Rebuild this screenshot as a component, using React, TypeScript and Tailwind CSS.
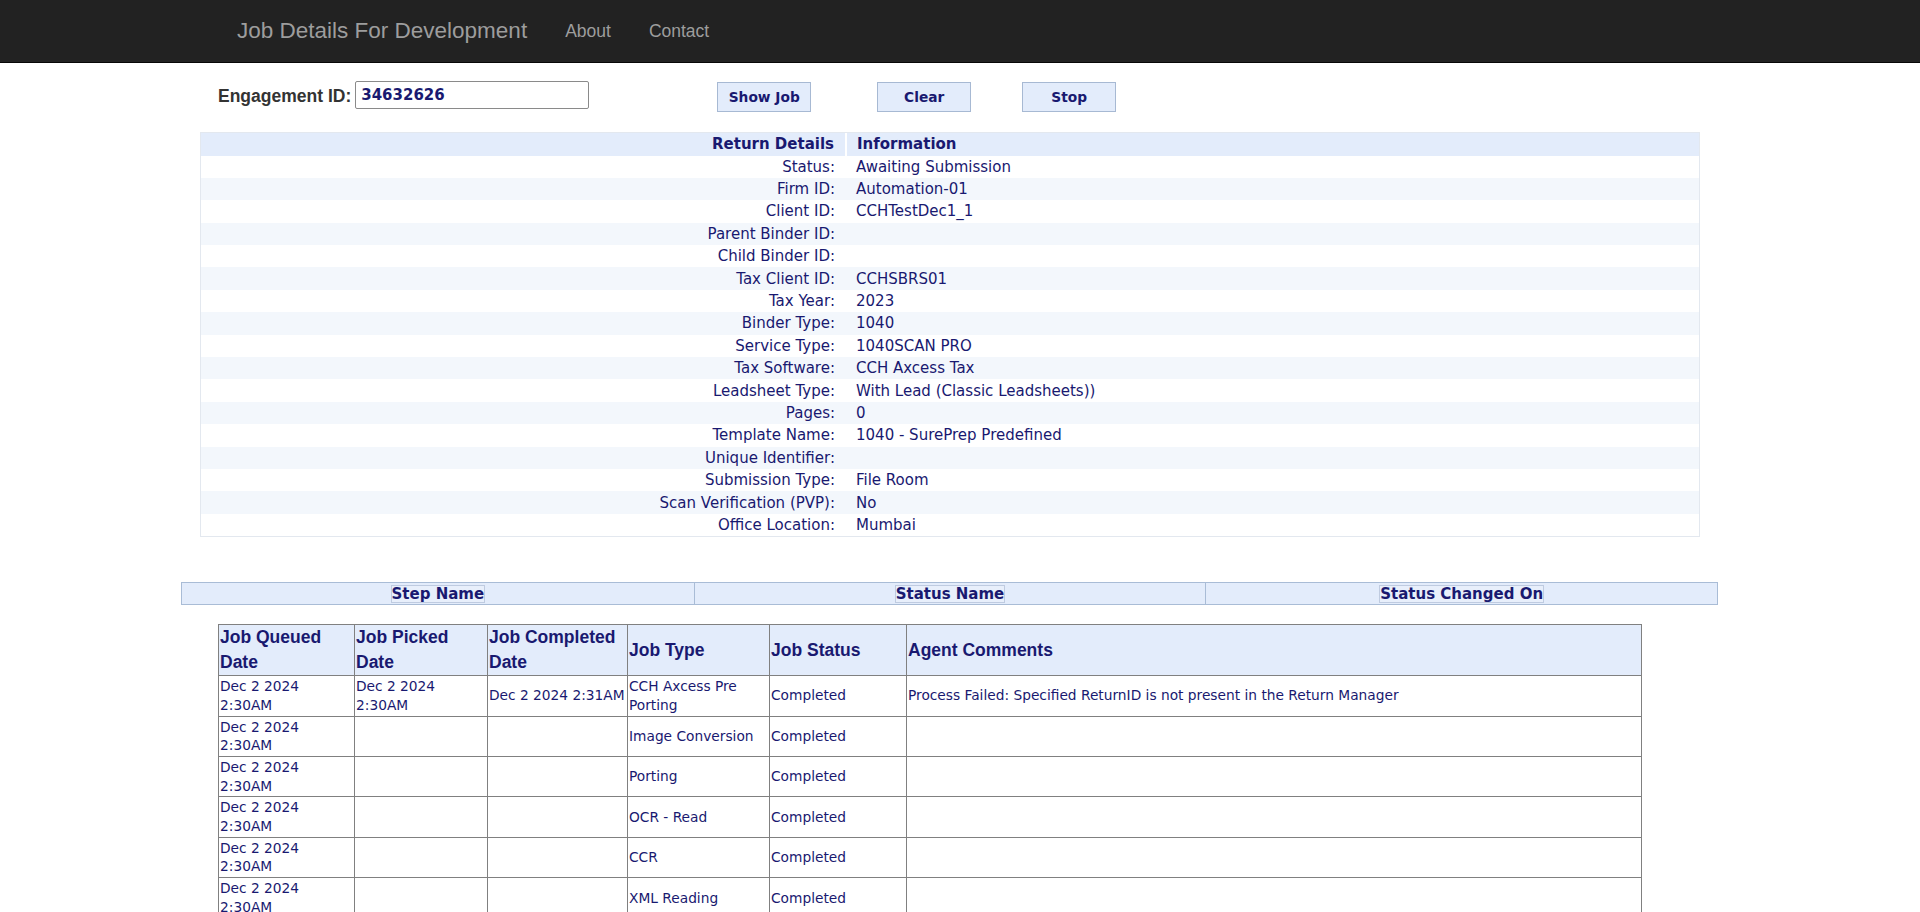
import { useState } from 'react';

type DetailRow = { label: string; value: string };

const details: DetailRow[] = [
  { label: 'Status:', value: 'Awaiting Submission' },
  { label: 'Firm ID:', value: 'Automation-01' },
  { label: 'Client ID:', value: 'CCHTestDec1_1' },
  { label: 'Parent Binder ID:', value: '' },
  { label: 'Child Binder ID:', value: '' },
  { label: 'Tax Client ID:', value: 'CCHSBRS01' },
  { label: 'Tax Year:', value: '2023' },
  { label: 'Binder Type:', value: '1040' },
  { label: 'Service Type:', value: '1040SCAN PRO' },
  { label: 'Tax Software:', value: 'CCH Axcess Tax' },
  { label: 'Leadsheet Type:', value: 'With Lead (Classic Leadsheets))' },
  { label: 'Pages:', value: '0' },
  { label: 'Template Name:', value: '1040 - SurePrep Predefined' },
  { label: 'Unique Identifier:', value: '' },
  { label: 'Submission Type:', value: 'File Room' },
  { label: 'Scan Verification (PVP):', value: 'No' },
  { label: 'Office Location:', value: 'Mumbai' },
];

type JobRow = {
  queued: string;
  picked: string;
  completed: string;
  type: string;
  status: string;
  comments: string;
};

const jobs: JobRow[] = [
  {
    queued: 'Dec 2 2024 2:30AM',
    picked: 'Dec 2 2024 2:30AM',
    completed: 'Dec 2 2024 2:31AM',
    type: 'CCH Axcess Pre Porting',
    status: 'Completed',
    comments: 'Process Failed: Specified ReturnID is not present in the Return Manager',
  },
  { queued: 'Dec 2 2024 2:30AM', picked: '', completed: '', type: 'Image Conversion', status: 'Completed', comments: '' },
  { queued: 'Dec 2 2024 2:30AM', picked: '', completed: '', type: 'Porting', status: 'Completed', comments: '' },
  { queued: 'Dec 2 2024 2:30AM', picked: '', completed: '', type: 'OCR - Read', status: 'Completed', comments: '' },
  { queued: 'Dec 2 2024 2:30AM', picked: '', completed: '', type: 'CCR', status: 'Completed', comments: '' },
  { queued: 'Dec 2 2024 2:30AM', picked: '', completed: '', type: 'XML Reading', status: 'Completed', comments: '' },
  { queued: 'Dec 2 2024 2:30AM', picked: '', completed: '', type: 'Bookmarking', status: 'Completed', comments: '' },
  { queued: 'Dec 2 2024 2:30AM', picked: '', completed: '', type: 'Verification', status: 'Completed', comments: '' },
];

const verdana = "font-['DejaVu_Sans',Verdana,sans-serif]";
const arial = "font-['Liberation_Sans',Arial,sans-serif]";

export default function App() {
  const [engagementId, setEngagementId] = useState('34632626');

  return (
    <div className="min-h-screen bg-white">
      <nav className={`flex h-[63px] items-center border-b border-[#080808] bg-[#222] ${arial}`}>
        <span className="ml-[237px] text-[22.5px] text-[#9d9d9d]">Job Details For Development</span>
        <span className="ml-[38px] text-[17.5px] text-[#9d9d9d]">About</span>
        <span className="ml-[38px] text-[17.5px] text-[#9d9d9d]">Contact</span>
      </nav>

      <div className="ml-[218px] mt-[18px] flex h-[31px] items-start">
        <label className={`mt-[1px] text-[17.5px] font-bold leading-[28px] text-[#333] ${arial}`}>
          Engagement ID:
        </label>
        <input
          value={engagementId}
          onChange={(e) => setEngagementId(e.target.value)}
          className={`ml-[4px] h-[28px] w-[234px] rounded-[2px] border border-[#8a8a8a] px-[5px] text-[15px] font-bold text-[#191970] outline-none ${verdana}`}
        />
        <ActionButton label="Show Job" className="ml-[128px]" />
        <ActionButton label="Clear" className="ml-[66px]" />
        <ActionButton label="Stop" className="ml-[51px]" />
      </div>

      <div className={`ml-[200px] mt-[20px] w-[1500px] border border-[#e3e8ef] ${verdana}`}>
        <table className="w-full border-collapse text-[15px] text-[#191970]">
          <thead>
            <tr className="h-[22px] bg-[#e3ecfb]">
              <th className="w-[645px] pr-[11px] text-right font-bold">Return Details</th>
              <th className="border-l-2 border-white pl-[10px] text-left font-bold">Information</th>
            </tr>
          </thead>
          <tbody>
            {details.map((row, i) => (
              <tr key={row.label} className={`h-[22.4px] ${i % 2 === 1 ? 'bg-[#f3f7fc]' : 'bg-white'}`}>
                <td className="pr-[11px] text-right leading-[18px]">{row.label}</td>
                <td className="pl-[10px] leading-[18px]">{row.value}</td>
              </tr>
            ))}
          </tbody>
        </table>
      </div>

      <div
        className={`ml-[181px] mt-[45px] grid h-[23px] w-[1537px] grid-cols-3 border border-[#a9bcd6] bg-[#e3ecfb] text-[15px] font-bold text-[#191970] ${verdana}`}
      >
        {['Step Name', 'Status Name', 'Status Changed On'].map((h, i) => (
          <div key={h} className={`flex items-center justify-center ${i > 0 ? 'border-l border-[#a9bcd6]' : ''}`}>
            <span className="border border-[#bfcbe0] bg-[#e8effb] leading-[16px]">{h}</span>
          </div>
        ))}
      </div>

      <table className="ml-[218px] mt-[19px] mb-10 w-[1424px] table-fixed border-collapse text-[#191970]">
        <colgroup>
          <col className="w-[136px]" />
          <col className="w-[133px]" />
          <col className="w-[140px]" />
          <col className="w-[142px]" />
          <col className="w-[137px]" />
          <col />
        </colgroup>
        <thead>
          <tr className={`bg-[#e3ecfb] text-left text-[17.5px] font-bold leading-[25px] ${arial}`}>
            {['Job Queued Date', 'Job Picked Date', 'Job Completed Date', 'Job Type', 'Job Status', 'Agent Comments'].map((h) => (
              <th key={h} className="border border-[#808080] px-px py-0 align-middle font-bold">
                {h}
              </th>
            ))}
          </tr>
        </thead>
        <tbody className={`text-[13.75px] leading-[18.7px] ${verdana}`}>
          {jobs.map((job, i) => (
            <tr key={i}>
              <td className="border border-[#808080] px-px py-px align-middle">{job.queued}</td>
              <td className="border border-[#808080] px-px py-px align-middle">{job.picked}</td>
              <td className="whitespace-nowrap border border-[#808080] px-px py-px align-middle">{job.completed}</td>
              <td className="border border-[#808080] px-px py-px align-middle">{job.type}</td>
              <td className="border border-[#808080] px-px py-px align-middle">{job.status}</td>
              <td className="border border-[#808080] px-px py-px align-middle">{job.comments}</td>
            </tr>
          ))}
        </tbody>
      </table>
    </div>
  );
}

function ActionButton({ label, className }: { label: string; className: string }) {
  return (
    <button
      className={`mt-[1px] h-[30px] w-[94px] border border-[#a7b9d3] bg-[#e3ecfb] text-[13.75px] font-bold text-[#191970] ${verdana} ${className}`}
    >
      {label}
    </button>
  );
}
